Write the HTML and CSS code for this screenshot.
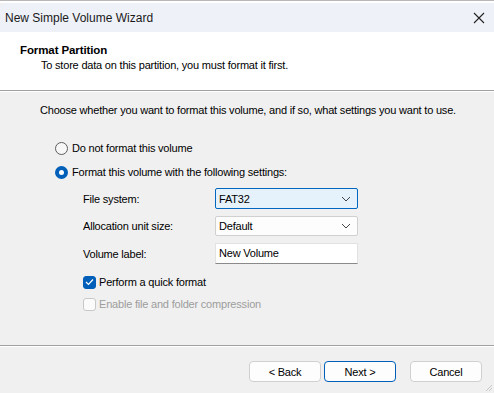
FILE: index.html
```html
<!DOCTYPE html>
<html lang="en">
<head>
    <meta charset="UTF-8">
    <title>New Simple Volume Wizard</title>
    <link rel="stylesheet" href="styles.css">
</head>
<body>
    <div class="window">
        <div class="behind"></div>

        <!-- Title bar -->
        <div class="titlebar">
            <span class="title">New Simple Volume Wizard</span>
            <svg class="close" width="12" height="12" viewBox="0 0 12 12">
                <path d="M1 1 L11 11 M11 1 L1 11" stroke="#222" stroke-width="1.1" fill="none"/>
            </svg>
        </div>

        <!-- Page header -->
        <div class="header">
            <h2>Format Partition</h2>
            <p>To store data on this partition, you must format it first.</p>
        </div>

        <!-- Body -->
        <div class="content">
            <p class="intro">Choose whether you want to format this volume, and if so, what settings you want to use.</p>

            <div class="radio-row">
                <span class="radio"></span>
                <span>Do not format this volume</span>
            </div>
            <div class="radio-row">
                <span class="radio checked"></span>
                <span>Format this volume with the following settings:</span>
            </div>

            <div class="settings">
                <label class="field-label">File system:</label>
                <div class="combo focused"><span>FAT32</span><svg class="chev" width="10" height="6" viewBox="0 0 10 6"><path d="M1 1 L5 5 L9 1" stroke="#444" fill="none"/></svg></div>

                <label class="field-label">Allocation unit size:</label>
                <div class="combo"><span>Default</span><svg class="chev" width="10" height="6" viewBox="0 0 10 6"><path d="M1 1 L5 5 L9 1" stroke="#444" fill="none"/></svg></div>

                <label class="field-label">Volume label:</label>
                <div class="textbox">New Volume</div>
            </div>

            <div class="check-row">
                <span class="check checked">
                    <svg width="9" height="8" viewBox="0 0 9 8"><path d="M1 4 L3.5 6.5 L8 1.5" stroke="#fff" stroke-width="1.2" fill="none"/></svg>
                </span>
                <span>Perform a quick format</span>
            </div>
            <div class="check-row disabled">
                <span class="check"></span>
                <span>Enable file and folder compression</span>
            </div>
        </div>

        <!-- Buttons -->
        <div class="footer">
            <button class="btn">&lt; Back</button>
            <button class="btn default">Next &gt;</button>
            <button class="btn cancel">Cancel</button>
            <svg class="grip" width="10" height="10" viewBox="0 0 10 10"><path d="M9 3 L3 9 M9 6 L6 9" stroke="#c8c8c8" fill="none"/></svg>
        </div>
    </div>
</body>
</html>
```

FILE: styles.css
```css
* { box-sizing: border-box; margin: 0; padding: 0; }
body { font-family: "Liberation Sans", Arial, sans-serif; font-size: 11px; letter-spacing: -0.2px; color: #000; background: #fff; }

.window { width: 494px; height: 393px; display: flex; flex-direction: column; background: #f0f0f0; overflow: hidden; }

/* strip of the window behind */
.behind { height: 3px; background: #fff; border-top: 1px solid #b8b8b8; }

/* Title bar */
.titlebar {
    height: 29px; background: #eef1f8; display: flex; align-items: center; justify-content: space-between;
    padding: 0 9px 0 5px; border-top-left-radius: 6px;
}
.title { font-size: 12px; letter-spacing: 0; color: #1a1a1a; }
.close { margin-top: 1px; }

/* Header */
.header { height: 59px; background: #fff; padding: 11px 0 0 20px; border-bottom: 1px solid #a0a0a0; }
.header h2 { font-size: 11.5px; font-weight: bold; line-height: 15px; letter-spacing: -0.1px; }
.header p { line-height: 15px; padding-left: 21px; }

/* Content */
.content { height: 255px; border-top: 1px solid #fff; padding: 10px 0 0 40px; border-bottom: 1px solid #a0a0a0; }
.intro { line-height: 16px; margin-bottom: 22px; }

.radio-row { display: flex; align-items: center; height: 16px; margin: 0 0 8px 15px; gap: 4px; }
.radio { width: 13px; height: 13px; border-radius: 50%; border: 1px solid #5d5d5d; background: #f7f7f7; }
.radio.checked { border: 4px solid #005fb8; background: #fff; }

.settings {
    display: grid; grid-template-columns: 132px 143px; grid-template-rows: 21px 20px 21px; row-gap: 7px;
    margin: 7px 0 0 43px; align-items: center;
}
.settings .field-label { line-height: 16px; }
.settings .textbox { margin-top: -1px; }

.combo {
    height: 100%; display: flex; align-items: center; justify-content: space-between;
    padding: 0 6px 0 3px; border: 1px solid #d0d0d0; background: #fdfdfd; border-radius: 2px;
}
.combo.focused { border-color: #0067c0; background: #e5f1fb; }
.textbox { height: 21px; background: #fff; border: 1px solid #e2e2e2; border-bottom-color: #8a8a8a; padding: 2px 3px; line-height: 15px; }

.check-row { display: flex; align-items: center; gap: 3px; height: 16px; margin: 10px 0 0 43px; }
.check { width: 13px; height: 13px; border: 1px solid #c8c8c8; border-radius: 3px; background: #fbfbfb; display: flex; align-items: center; justify-content: center; }
.check.checked { background: #005fb8; border-color: #005fb8; }
.check-row.disabled { color: #9d9d9d; }
.check-row + .check-row { margin-top: 6px; }

/* Footer */
.footer { flex: 1; border-top: 1px solid #fff; display: flex; justify-content: flex-end; align-items: flex-start; padding: 14px 12px 0 0; position: relative; }
.btn {
    width: 72px; height: 21px; font-family: inherit; font-size: 11px; letter-spacing: -0.2px; color: #000;
    background: #fdfdfd; border: 1px solid #d0d0d0; border-radius: 4px;
}
.btn.default { border-color: #005fb8; margin-left: 3px; }
.btn.cancel { margin-left: 14px; }
.grip { position: absolute; right: 1px; bottom: 1px; }
```
